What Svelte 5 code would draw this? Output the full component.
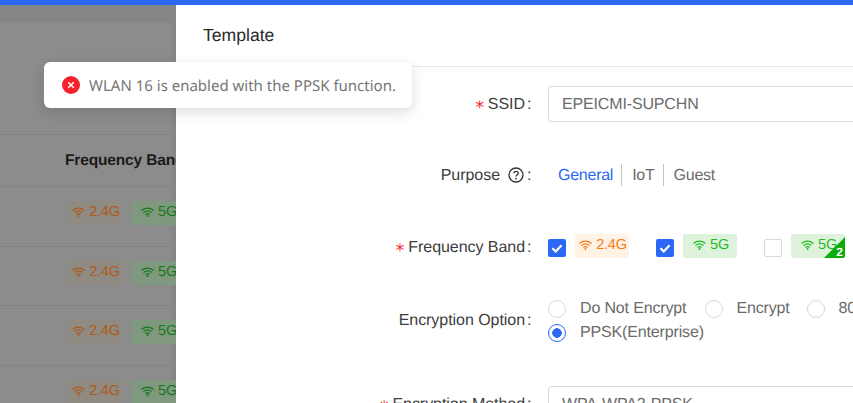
<script>
  const rows = [0, 1, 2, 3];
  const purposes = ['General', 'IoT', 'Guest'];
</script>

{#snippet wifi()}
  <svg class="wifi" viewBox="0 0 13 10" width="13" height="10" aria-hidden="true">
    <path d="M.8 3.2C4 .5 9 .5 12.2 3.2M2.8 5.2C5 3.5 8 3.5 10.2 5.2M4.7 7.2C5.8 6.4 7.2 6.4 8.3 7.2" fill="none" stroke="currentColor" stroke-width="1.2" stroke-linecap="round"/>
    <circle cx="6.5" cy="9" r="1" fill="currentColor"/>
  </svg>
{/snippet}

{#snippet check()}
  <svg viewBox="0 0 18 18" width="18" height="18" aria-hidden="true">
    <path d="M4.4 9.3 7.7 12.4 13.6 6.2" fill="none" stroke="#fff" stroke-width="2.2"/>
  </svg>
{/snippet}

<div class="page">
  <div class="topbar"></div>
  <div class="content">
    <div class="backdrop">
      <div class="band"></div>
      <div class="spacer"></div>
      <div class="thead"><span>Frequency Band</span></div>
      {#each rows as r}
        <div class="trow">
          <span class="dim-tag orange">{@render wifi()}2.4G</span>
          <span class="dim-tag green">{@render wifi()}5G</span>
        </div>
      {/each}
    </div>
    <div class="drawer">
      <div class="title">Template</div>
      <div class="form">
        <div class="row ssid">
          <div class="label"><i>*</i>SSID<b>:</b></div>
          <div class="input">EPEICMI-SUPCHN</div>
        </div>
        <div class="row purpose">
          <div class="label">Purpose
            <svg class="help" viewBox="0 0 16 16" width="16" height="16" aria-hidden="true">
              <circle cx="8" cy="8" r="7" fill="none" stroke="#333" stroke-width="1.3"/>
              <path d="M5.9 6.3C5.9 3.7 10.2 3.7 10.2 6.2 10.2 7.8 8 7.7 8 9.6" fill="none" stroke="#333" stroke-width="1.3"/>
              <circle cx="8" cy="11.6" r=".9" fill="#333"/>
            </svg><b>:</b>
          </div>
          <div class="tabs">
            {#each purposes as p, i}
              <span class="tab" class:active={i === 0}>{p}</span>
            {/each}
          </div>
        </div>
        <div class="row band-row">
          <div class="label"><i>*</i>Frequency Band<b>:</b></div>
          <div class="bands">
            <span class="box on">{@render check()}</span>
            <span class="tag orange-l">{@render wifi()}2.4G</span>
            <span class="box on second">{@render check()}</span>
            <span class="tag green-l">{@render wifi()}5G</span>
            <span class="box third"></span>
            <span class="tag green-l corner">{@render wifi()}5G<em>2</em></span>
          </div>
        </div>
        <div class="row enc">
          <div class="label">Encryption Option<b>:</b></div>
          <div class="radios">
            <div class="radio-line">
              <span class="radio"></span><span class="rtext first">Do Not Encrypt</span>
              <span class="radio"></span><span class="rtext second">Encrypt</span>
              <span class="radio"></span><span class="rtext">802.1X(Enterprise)</span>
            </div>
            <div class="radio-line">
              <span class="radio sel"></span><span class="rtext">PPSK(Enterprise)</span>
            </div>
          </div>
        </div>
        <div class="row method">
          <div class="label"><i>*</i>Encryption Method<b>:</b></div>
          <div class="input">WPA-WPA2-PPSK</div>
        </div>
      </div>
    </div>
  </div>
  <div class="toast">
    <svg viewBox="0 0 18 18" width="18" height="18" aria-hidden="true">
      <circle cx="9" cy="9" r="9" fill="#f5222d"/>
      <path d="M6.2 6.2 11.8 11.8M11.8 6.2 6.2 11.8" stroke="#fff" stroke-width="1.5"/>
    </svg>
    <span class="toast-text">WLAN 16 is enabled with the PPSK function.</span>
  </div>
</div>

<style>
  :global(body) {
    margin: 0;
    background: #fff;
  }
  .page {
    position: relative;
    width: 853px;
    height: 403px;
    overflow: hidden;
    display: flex;
    flex-direction: column;
    font-family: "Liberation Sans", Arial, sans-serif;
    font-size: 16px;
    letter-spacing: -0.15px;
    text-rendering: geometricPrecision;
    color: #595959;
  }
  .topbar {
    height: 5px;
    flex: none;
    background: #2b68f6;
  }
  .content {
    flex: 1;
    display: flex;
    min-height: 0;
  }
  .backdrop {
    width: 176px;
    flex: none;
    background: #8c8c8c;
    overflow: hidden;
    box-shadow: inset -8px 0 8px -8px rgba(0, 0, 0, 0.12);
  }
  .band {
    height: 18px;
    background: #858686;
  }
  .spacer {
    height: 111px;
  }
  .thead {
    height: 51px;
    border-top: 1px solid #838383;
    border-bottom: 1px solid #838383;
    display: flex;
    align-items: center;
    padding-left: 65px;
    box-sizing: content-box;
    font-size: 15.5px;
    font-weight: 700;
    color: #1a1a1a;
    white-space: nowrap;
  }
  .trow {
    height: 58.5px;
    border-bottom: 1px solid #838383;
    display: flex;
    align-items: center;
    gap: 9px;
    padding-left: 68px;
    white-space: nowrap;
    box-sizing: content-box;
  }
  .dim-tag {
    flex: none;
    width: 54px;
    height: 24px;
    border-radius: 2px;
    display: inline-flex;
    align-items: center;
    justify-content: center;
    gap: 4px;
    padding-left: 2px;
    padding-bottom: 2px;
    box-sizing: border-box;
    font-size: 14.5px;
    letter-spacing: -0.2px;
    margin-top: -6px;
  }
  .dim-tag.orange {
    background: #8f8a82;
    color: #ad5a1c;
  }
  .dim-tag.green {
    background: #7f987f;
    color: #14781a;
  }
  .drawer {
    flex: 1;
    background: #fff;
    min-width: 0;
  }
  .title {
    height: 61px;
    border-bottom: 1px solid #e8e8e8;
    padding-left: 27px;
    display: flex;
    align-items: center;
    font-size: 17.6px;
    letter-spacing: 0;
    color: #2a2a2a;
  }
  .form {
    padding-top: 19px;
    display: flex;
    flex-direction: column;
  }
  .row {
    display: flex;
    align-items: center;
    white-space: nowrap;
  }
  .label {
    width: 354px;
    flex: none;
    display: flex;
    align-items: center;
    justify-content: flex-end;
    color: #3d3d3d;
    margin-right: 18px;
    padding-top: 2px;
    letter-spacing: -0.05px;
  }
  .label i {
    font-family: "DejaVu Sans", sans-serif;
    font-style: normal;
    font-size: 17px;
    color: #f5222d;
    margin-right: 4px;
    margin-top: 5px;
  }
  .label b {
    font-weight: 400;
    margin-left: 2px;
    width: 4px;
    margin-right: -1px;
  }
  .help {
    margin-left: 8px;
    margin-right: 1px;
    margin-top: -2px;
  }
  .input {
    flex: 1;
    height: 36px;
    box-sizing: border-box;
    border: 1px solid #d9d9d9;
    border-right: 0;
    border-radius: 4px 0 0 4px;
    padding-left: 13px;
    padding-top: 2px;
    display: flex;
    align-items: center;
    color: #6b6b6b;
  }
  .purpose {
    height: 32px;
    margin-top: 37px;
  }
  .tabs {
    display: flex;
    align-items: center;
    margin-left: 10px;
  }
  .tab {
    height: 22px;
    line-height: 24px;
    padding: 0 8px 0 10px;
    border-left: 1px solid #c4c4c4;
    color: #6b6b6b;
    letter-spacing: -0.25px;
  }
  .tab.active {
    color: #2b68f6;
    border-left: 0;
    padding-left: 0;
  }
  .band-row {
    height: 32px;
    margin-top: 40px;
  }
  .bands {
    display: flex;
    align-items: flex-start;
    height: 32px;
  }
  .box {
    width: 18px;
    height: 18px;
    margin-top: 8px;
    border-radius: 2px;
    box-sizing: border-box;
    flex: none;
    border: 1px solid #d9d9d9;
  }
  .box.on {
    background: #2b68f6;
    border: 0;
  }
  .box.second {
    margin-left: 27px;
  }
  .box.third {
    margin-left: 27px;
  }
  .tag {
    margin-left: 9px;
    margin-top: 3px;
    width: 54px;
    height: 24px;
    border-radius: 2px;
    display: inline-flex;
    align-items: center;
    justify-content: center;
    gap: 4px;
    padding-left: 2px;
    padding-bottom: 2px;
    box-sizing: border-box;
    font-size: 14.5px;
    letter-spacing: -0.2px;
    flex: none;
    position: relative;
    overflow: hidden;
  }
  .orange-l {
    background: #fff3e6;
    color: #f97a14;
  }
  .green-l {
    background: #dff3dc;
    color: #1fbb1f;
  }
  .corner::after {
    content: "";
    position: absolute;
    right: 0;
    bottom: 0;
    border-style: solid;
    border-width: 0 0 21px 21px;
    border-color: transparent transparent #0bad0b transparent;
  }
  .corner em {
    position: absolute;
    right: 2px;
    bottom: -1px;
    z-index: 1;
    font-style: normal;
    font-weight: 700;
    font-size: 12px;
    letter-spacing: 0;
    color: #fff;
  }
  .enc {
    margin-top: 34px;
    height: 44px;
  }
  .enc .label {
    padding-top: 4px;
  }
  .radios {
    display: flex;
    flex-direction: column;
    gap: 6px;
    margin-top: 4px;
  }
  .radio-line {
    display: flex;
    align-items: center;
    height: 18px;
  }
  .radio {
    width: 18px;
    height: 18px;
    flex: none;
    border-radius: 50%;
    border: 1px solid #d9d9d9;
    box-sizing: border-box;
  }
  .radio.sel {
    border-color: #2b68f6;
    background: radial-gradient(circle, #2b68f6 0 4.5px, #fff 5px);
  }
  .rtext {
    margin-left: 14px;
    color: #6b6b6b;
    margin-top: -1px;
  }
  .rtext.first {
    margin-right: 19px;
  }
  .rtext.second {
    margin-left: 13px;
    margin-right: 17px;
  }
  .method {
    margin-top: 45px;
  }
  .toast {
    position: absolute;
    left: 44px;
    top: 62px;
    width: 368px;
    height: 46px;
    box-sizing: border-box;
    background: #fff;
    border-radius: 6px;
    box-shadow: 0 4px 14px rgba(0, 0, 0, 0.14);
    display: flex;
    align-items: center;
    gap: 9px;
    padding-left: 18px;
    font-family: "Noto Sans", sans-serif;
    font-size: 15px;
    letter-spacing: 0;
    color: #757575;
    white-space: nowrap;
  }
  .toast-text {
    margin-top: 2px;
  }
</style>
